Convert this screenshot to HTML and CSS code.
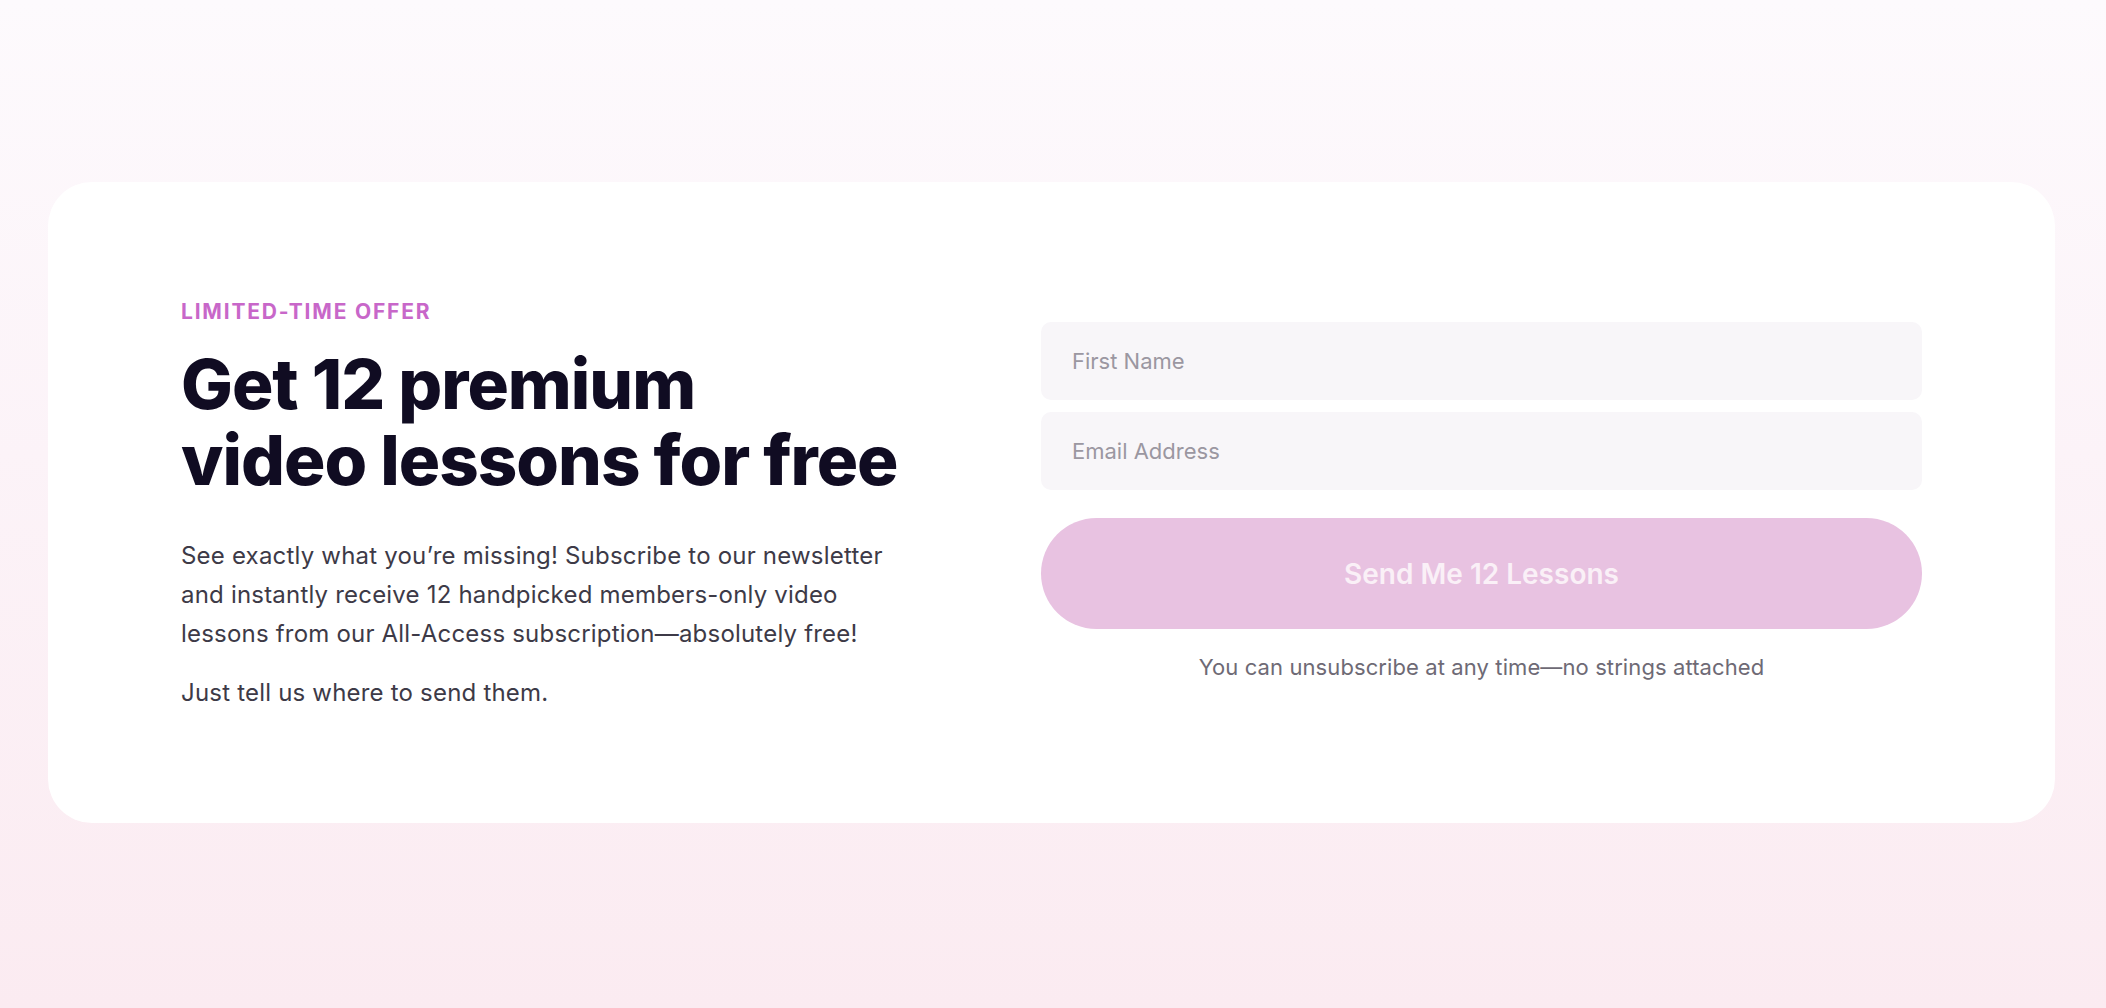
FILE: index.html
```html
<!DOCTYPE html>
<html lang="en">
<head>
<meta charset="utf-8">
<title>Get 12 premium video lessons for free</title>
<link rel="stylesheet" href="styles.css">
</head>
<body>
<main class="page">
  <section class="card">
    <div class="intro">
      <p class="eyebrow">LIMITED-TIME OFFER</p>
      <h1 class="title">Get 12 premium<br>video lessons for free</h1>
      <p class="copy">See exactly what you’re missing! Subscribe to our newsletter and instantly receive 12 handpicked members-only video lessons from our All-Access subscription—absolutely free!</p>
      <p class="copy copy-last">Just tell us where to send them.</p>
    </div>
    <form class="signup">
      <input class="field" type="text" placeholder="First Name">
      <input class="field" type="email" placeholder="Email Address">
      <button class="submit" type="button">Send Me 12 Lessons</button>
      <p class="note">You can unsubscribe at any time—no strings attached</p>
    </form>
  </section>
</main>
</body>
</html>
```
FILE: styles.css
```css
* { box-sizing: border-box; }
html, body { margin: 0; padding: 0; }
body {
  width: 2106px;
  height: 1008px;
  overflow: hidden;
  font-family: Inter, "Noto Sans", sans-serif;
  background: linear-gradient(180deg, #fdfafd 0%, #fcf3f8 45%, #fbebf1 100%);
}
.page {
  padding: 182px 51px 0 48px;
}
.card {
  height: 641px;
  background: #ffffff;
  border-radius: 44px;
  padding: 0 133px;
  display: grid;
  grid-template-columns: 1fr 881px;
  align-items: center;
}
.intro { padding-top: 7px; }
.eyebrow {
  margin: 0;
  font-size: 21px;
  line-height: 24px;
  font-weight: 700;
  letter-spacing: 1.8px;
  color: #c867c9;
}
.title {
  margin: 22px 0 0;
  font-size: 69px;
  line-height: 76px;
  font-weight: 800;
  letter-spacing: -1px;
  color: #100c22;
}
.copy {
  margin: 38px 0 0;
  font-size: 24px;
  line-height: 39px;
  color: #3d3a47;
  max-width: 730px;
  letter-spacing: 0.2px;
}
.copy-last { margin-top: 20px; }
.signup {
  display: flex;
  flex-direction: column;
  padding-bottom: 2px;
}
.field {
  height: 78px;
  border: none;
  border-radius: 10px;
  background: #f8f6f9;
  padding: 0 31px;
  font-family: Inter, "Noto Sans", sans-serif;
  font-size: 22px;
  color: #3d3a47;
  outline: none;
}
.field + .field { margin-top: 12px; }
.field::placeholder { color: #9b97a1; }
.submit {
  margin-top: 28px;
  height: 111px;
  border: none;
  border-radius: 56px;
  background: #e8c2e1;
  color: #faf0f7;
  font-family: Inter, "Noto Sans", sans-serif;
  font-size: 28px;
  font-weight: 600;
  letter-spacing: 0;
}
.note {
  margin: 24px 0 0;
  text-align: center;
  font-size: 22px;
  line-height: 28px;
  color: #6e6a75;
  letter-spacing: 0.1px;
}
```
